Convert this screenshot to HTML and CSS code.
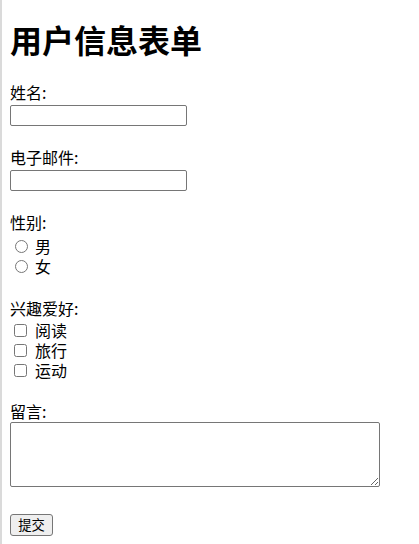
FILE: index.html
```html
<!DOCTYPE html>
<html lang="zh-CN">
<head>
  <meta charset="UTF-8">
  <title>用户信息表单</title>
  <link rel="stylesheet" href="styles.css">
</head>
<body>
  <h1>用户信息表单</h1>

  <form class="user-form">
    <div class="field">
      <label for="name">姓名:</label>
      <input type="text" id="name" name="name" class="text-input">
    </div>

    <div class="field">
      <label for="email">电子邮件:</label>
      <input type="email" id="email" name="email" class="text-input">
    </div>

    <div class="field">
      <label>性别:</label>
      <div class="options">
        <label class="option"><input type="radio" name="gender" value="male">男</label>
        <label class="option"><input type="radio" name="gender" value="female">女</label>
      </div>
    </div>

    <div class="field hobbies">
      <label>兴趣爱好:</label>
      <div class="options">
        <label class="option"><input type="checkbox" name="hobby" value="reading">阅读</label>
        <label class="option"><input type="checkbox" name="hobby" value="travel">旅行</label>
        <label class="option"><input type="checkbox" name="hobby" value="sport">运动</label>
      </div>
    </div>

    <div class="field message">
      <label for="message">留言:</label>
      <textarea id="message" name="message"></textarea>
    </div>

    <button type="submit">提交</button>
  </form>
</body>
</html>
```

FILE: styles.css
```css
html {
  border-left: 2px solid #dadada;
  background: #fff;
}

body {
  margin: 0 8px 8px;
  font-family: "Noto Sans CJK SC", "Liberation Sans", sans-serif;
  font-size: 16px;
  line-height: 20px;
  color: #000;
}

h1 {
  font-size: 32px;
  line-height: 37px;
  font-weight: bold;
  margin: 21px 0 24px;
}

.field {
  margin-bottom: 21px;
}

.field > label {
  display: block;
}

.text-input {
  display: block;
  box-sizing: border-box;
  width: 177px;
  height: 21px;
  margin: 3px 0 0;
  border: 1px solid #767676;
  border-radius: 2px;
  padding: 1px 2px;
}

.options {
  margin-top: 4px;
}

.option {
  display: flex;
  align-items: center;
  height: 20px;
}

.option input[type="radio"] {
  width: 13px;
  height: 13px;
  margin: 0 7px 0 5px;
}

.option input[type="checkbox"] {
  width: 13px;
  height: 13px;
  margin: 0 8px 0 4px;
}

.hobbies {
  margin-top: 22px;
}

.hobbies .options {
  margin-top: 2px;
}

.message textarea {
  display: block;
  box-sizing: border-box;
  width: 370px;
  height: 65px;
  margin: 1px 0 0;
  border: 1px solid #767676;
  border-radius: 2px;
  resize: both;
}

.message {
  margin-bottom: 26px;
}

button {
  box-sizing: border-box;
  width: 43px;
  height: 22px;
  padding: 0;
  font-family: "Noto Sans CJK SC", sans-serif;
  font-size: 13.33px;
  line-height: 18px;
  background: #efefef;
  border: 1px solid #767676;
  border-radius: 3px;
  color: #000;
}
```
